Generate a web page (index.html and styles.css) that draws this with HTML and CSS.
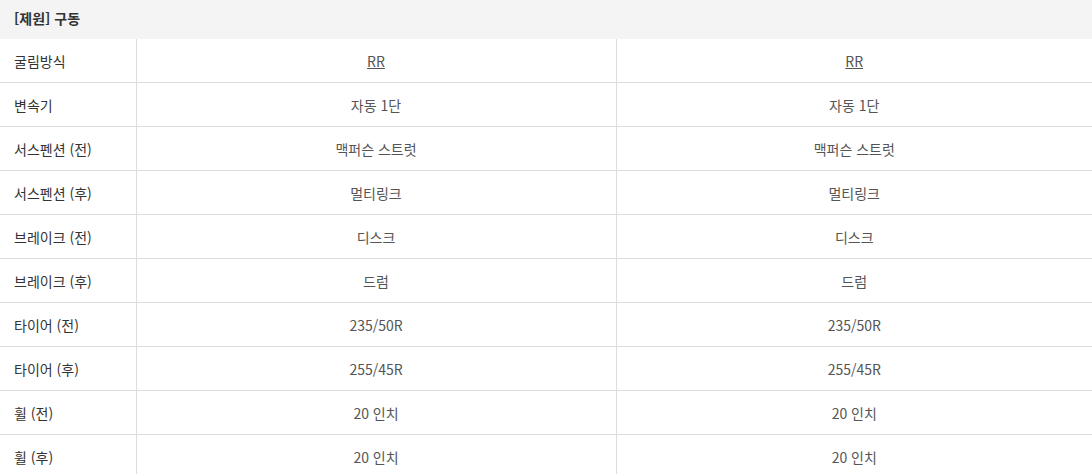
FILE: index.html
```html
<!DOCTYPE html>
<html lang="ko">
<head>
  <meta charset="UTF-8">
  <title>제원 - 구동</title>
  <link rel="stylesheet" href="styles.css">
</head>
<body>

  <div class="spec">
    <div class="spec-title">[제원] 구동</div>
    <table class="spec-table">
      <colgroup>
        <col class="col-label">
        <col class="col-value">
        <col>
      </colgroup>
      <tr><th>굴림방식</th><td><a href="#">RR</a></td><td><a href="#">RR</a></td></tr>
      <tr><th>변속기</th><td>자동 1단</td><td>자동 1단</td></tr>
      <tr><th>서스펜션 (전)</th><td>맥퍼슨 스트럿</td><td>맥퍼슨 스트럿</td></tr>
      <tr><th>서스펜션 (후)</th><td>멀티링크</td><td>멀티링크</td></tr>
      <tr><th>브레이크 (전)</th><td>디스크</td><td>디스크</td></tr>
      <tr><th>브레이크 (후)</th><td>드럼</td><td>드럼</td></tr>
      <tr><th>타이어 (전)</th><td>235/50R</td><td>235/50R</td></tr>
      <tr><th>타이어 (후)</th><td>255/45R</td><td>255/45R</td></tr>
      <tr><th>휠 (전)</th><td>20 인치</td><td>20 인치</td></tr>
      <tr><th>휠 (후)</th><td>20 인치</td><td>20 인치</td></tr>
    </table>
  </div>

</body>
</html>
```

FILE: styles.css
```css
body {
  margin: 0;
  background-color: #fff;
  font-family: 'Noto Sans CJK KR', 'Noto Sans', sans-serif;
  font-size: 14px;
  color: #333;
}
.spec-title {
  height: 39px;
  line-height: 37px;
  padding: 0 14px;
  background-color: #f4f4f4;
  font-weight: bold;
  color: #333;
}
.spec-table {
  width: 100%;
  border-collapse: collapse;
  table-layout: fixed;
}
.col-label {
  width: 136px;
}
.col-value {
  width: 480px;
}
.spec-table th,
.spec-table td {
  height: 43px;
  padding: 0;
  border-bottom: 1px solid #ddd;
  font-weight: normal;
  vertical-align: middle;
}
.spec-table th {
  text-align: left;
  padding-left: 14px;
  color: #333;
  border-right: 1px solid #ddd;
}
.spec-table td {
  text-align: center;
  color: #555;
}
.spec-table td + td {
  border-left: 1px solid #ddd;
}
.spec-table a {
  color: #555;
  text-decoration: underline;
}
```
